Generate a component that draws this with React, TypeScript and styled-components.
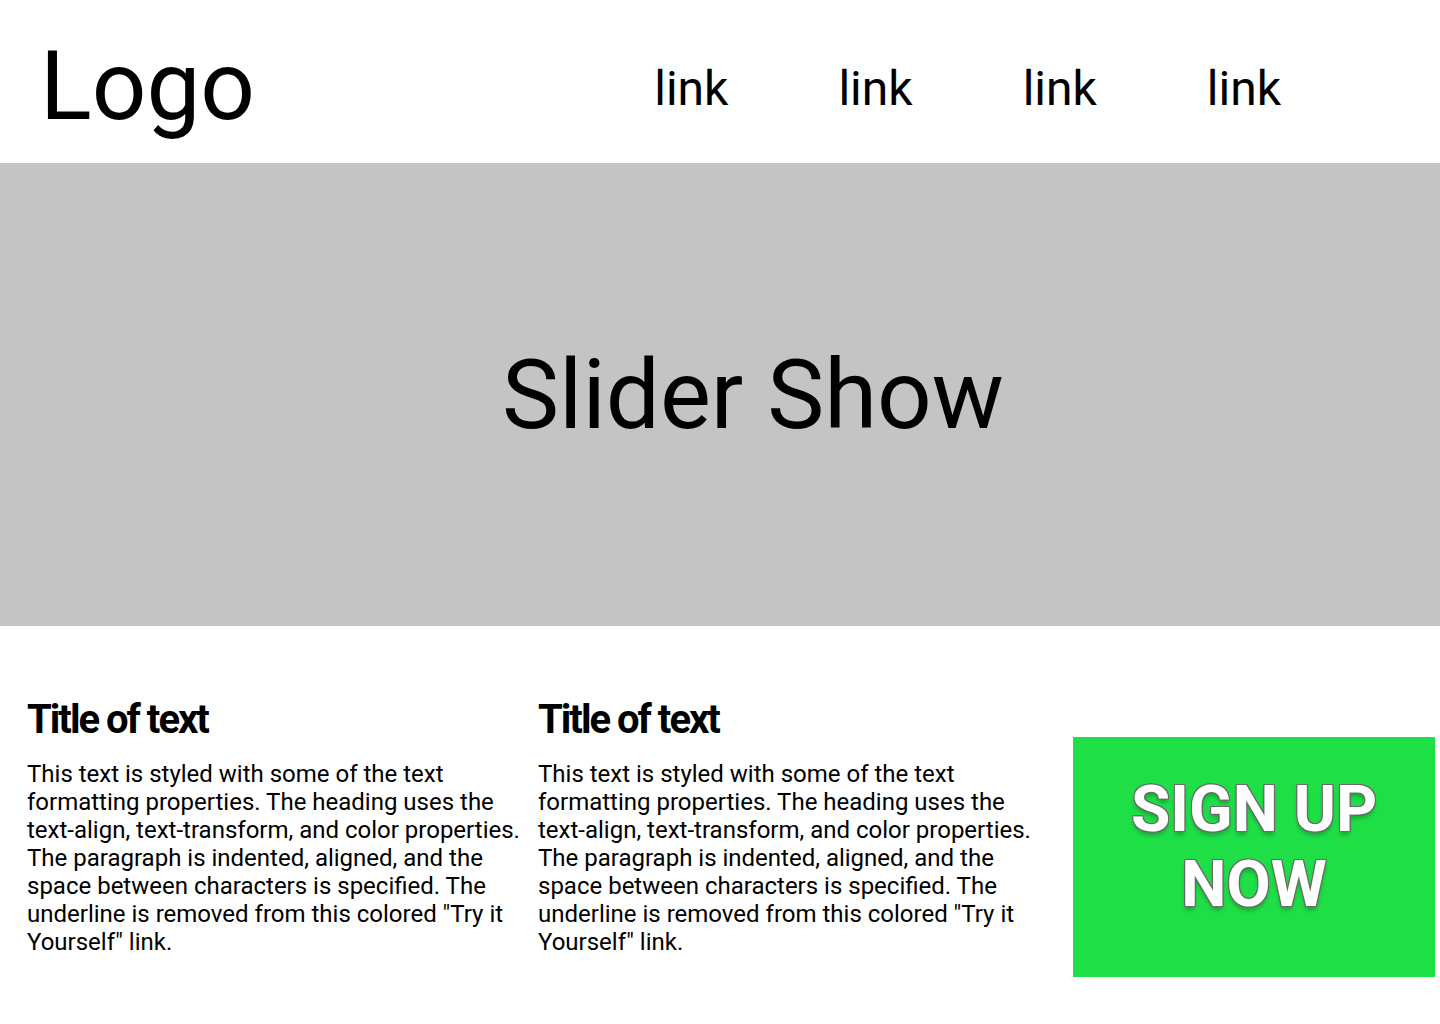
import React from "react";
import styled, { createGlobalStyle } from "styled-components";

const GlobalStyle = createGlobalStyle`
  html, body { margin: 0; padding: 0; background: #ffffff; }
  body { font-family: Roboto, "Liberation Sans", sans-serif; color: #000; }
  * { box-sizing: border-box; }
`;

const Page = styled.div`
  width: 1440px;
  min-height: 1024px;
  background: #ffffff;
`;

const Header = styled.header`
  height: 163px;
  display: flex;
  align-items: center;
  justify-content: space-between;
  padding: 0 159px 0 40px;
`;

const Logo = styled.div`
  font-size: 96px;
  line-height: 112px;
  font-weight: 400;
  margin-top: 8px;
`;

const Nav = styled.nav`
  display: flex;
  gap: 110px;
  margin-top: 14px;
`;

const NavLink = styled.a`
  font-size: 48px;
  line-height: 56px;
  color: #000;
  text-decoration: none;
`;

const Slider = styled.section`
  height: 463px;
  background: #c4c4c4;
  display: flex;
  align-items: center;
  justify-content: center;
  padding-left: 66px;
`;

const SliderTitle = styled.h1`
  margin: 0;
  font-size: 96px;
  font-weight: 400;
  line-height: 112px;
`;

const Content = styled.section`
  display: grid;
  grid-template-columns: 511px 535px 362px;
  padding: 70px 5px 40px 27px;
  align-items: start;
`;

const Article = styled.article`
  display: flex;
  flex-direction: column;
`;

const Title = styled.h2`
  margin: 0 0 17px;
  font-size: 40px;
  font-weight: 700;
  line-height: 47px;
  letter-spacing: -2px;
`;

const Paragraph = styled.p`
  margin: 0;
  font-size: 24px;
  line-height: 28px;
  width: 500px;
`;

const SignUp = styled.button`
  margin-top: 41px;
  width: 362px;
  height: 240px;
  border: none;
  background: #1fdf47;
  color: #ffffff;
  font-family: Roboto, "Liberation Sans", sans-serif;
  font-size: 64px;
  font-weight: 700;
  line-height: 75px;
  text-align: center;
  padding: 0 0 20px;
  text-shadow:
    -1px 0 0 #6a6a6a,
    1px 0 0 #6a6a6a,
    0 -1px 0 #6a6a6a,
    0 1px 0 #6a6a6a,
    -1px -1px 0 #6a6a6a,
    1px 1px 0 #6a6a6a,
    -1px 1px 0 #6a6a6a,
    1px -1px 0 #6a6a6a,
    0 4px 4px rgba(0, 0, 0, 0.25);
  cursor: pointer;
`;

const text =
  'This text is styled with some of the text formatting properties. The heading uses the text-align, text-transform, and color properties. The paragraph is indented, aligned, and the space between characters is specified. The underline is removed from this colored "Try it Yourself" link.';

export default function App() {
  return (
    <Page>
      <GlobalStyle />
      <Header>
        <Logo>Logo</Logo>
        <Nav>
          <NavLink href="#">link</NavLink>
          <NavLink href="#">link</NavLink>
          <NavLink href="#">link</NavLink>
          <NavLink href="#">link</NavLink>
        </Nav>
      </Header>
      <Slider>
        <SliderTitle>Slider Show</SliderTitle>
      </Slider>
      <Content>
        <Article>
          <Title>Title of text</Title>
          <Paragraph>{text}</Paragraph>
        </Article>
        <Article>
          <Title>Title of text</Title>
          <Paragraph>{text}</Paragraph>
        </Article>
        <SignUp>
          SIGN UP
          <br />
          NOW
        </SignUp>
      </Content>
    </Page>
  );
}
